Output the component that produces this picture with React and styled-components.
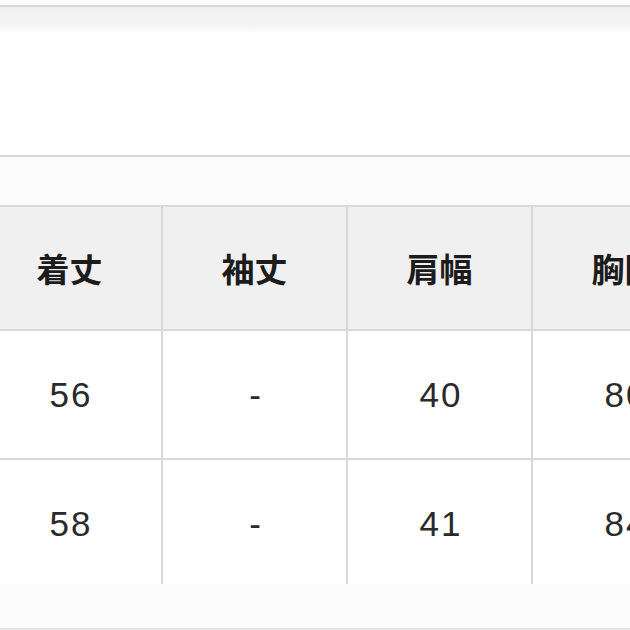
import React from "react";
import styled, { createGlobalStyle } from "styled-components";

const GlobalStyle = createGlobalStyle`
	html, body {
		margin: 0;
		padding: 0;
		background: #ffffff;
	}
	body {
		width: 630px;
		height: 630px;
		overflow: hidden;
		font-family: "Liberation Sans", Arial, sans-serif;
	}
`;

const Page = styled.div`
	width: 630px;
	height: 630px;
	overflow: hidden;
	display: flex;
	flex-direction: column;
`;

const TopEdge = styled.div`
	height: 5px;
	background: #fdfdfd;
	border-bottom: 2px solid #d6d6d6;
`;

const Panel = styled.div`
	height: 150px;
	background: linear-gradient(to bottom, #f1f1f1 0px, #f4f4f4 18px, #ffffff 28px);
	border-bottom: 2px solid #d9d9d9;
`;

const Strip = styled.div`
	height: 48px;
	background: #fbfbfb;
	border-bottom: 2px solid #dadada;
`;

const TableWrap = styled.div`
	overflow: hidden;
`;

const Table = styled.div`
	display: grid;
	grid-template-columns: repeat(4, 185px);
	margin-left: -22px;
	width: 740px;
`;

const Cell = styled.div`
	display: flex;
	align-items: center;
	justify-content: center;
	height: ${({ $head }) => ($head ? "122px" : "125px")};
	background: ${({ $head }) => ($head ? "#f0f0f0" : "#ffffff")};
	border-right: 2px solid #d9d9d9;
	border-bottom: 2px solid #d9d9d9;
	box-sizing: content-box;
	color: ${({ $head }) => ($head ? "#1c1c1c" : "#2a2a2a")};
	font-family: ${({ $head }) =>
		$head
			? `"Noto Sans CJK JP", "Noto Sans CJK SC", sans-serif`
			: `"Liberation Sans", Arial, sans-serif`};
	font-size: ${({ $head }) => ($head ? "33px" : "35px")};
	font-weight: ${({ $head }) => ($head ? 700 : 400)};
	letter-spacing: ${({ $head }) => ($head ? "0px" : "2px")};
	padding-top: ${({ $head }) => ($head ? "0" : "2px")};
	padding-left: ${({ $head }) => ($head ? "0" : "3px")};
`;

const Footer = styled.div`
	height: 44px;
	background: #fcfcfc;
	border-bottom: 2px solid #e2e2e2;
`;

const headers = ["着丈", "袖丈", "肩幅", "胸囲"];
const rows = [
	["56", "-", "40", "80"],
	["58", "-", "41", "84"],
];

export default function App() {
	return (
		<>
			<GlobalStyle />
			<Page>
				<TopEdge />
				<Panel />
				<Strip />
				<TableWrap>
					<Table>
						{headers.map((h) => (
							<Cell key={h} $head>
								{h}
							</Cell>
						))}
						{rows.map((row, i) =>
							row.map((v, j) => <Cell key={`${i}-${j}`}>{v}</Cell>)
						)}
					</Table>
				</TableWrap>
				<Footer />
			</Page>
		</>
	);
}
